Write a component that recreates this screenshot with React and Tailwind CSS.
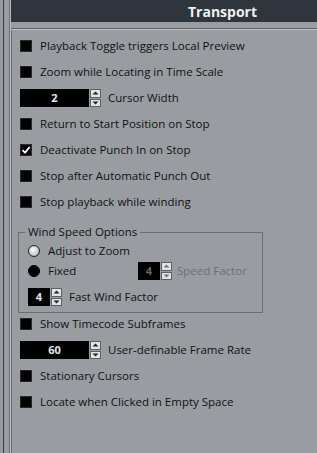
import { useState } from 'react';

const font = { fontFamily: '"Open Sans", "Noto Sans", sans-serif' };

// Black square checkbox, optionally ticked
const Check = ({ checked }) => (
  <span className="flex h-[12px] w-[12px] shrink-0 items-center justify-center border border-[#2a2a2a] bg-black">
    {checked && (
      <svg width="10" height="10" viewBox="0 0 10 10">
        <path d="M1.5 5.2 L4 7.6 L8.6 2.2" fill="none" stroke="#fff" strokeWidth="1.8" />
      </svg>
    )}
  </span>
);

const Row = ({ label, checked }) => (
  <div className="flex h-[26px] items-center gap-[8px] pl-[8px]">
    <Check checked={checked} />
    <span className="text-[11.5px] text-[#111]">{label}</span>
  </div>
);

// Tiny up/down spinner
const Spin = ({ disabled }) => (
  <div className="flex h-full w-[11px] flex-col gap-[1px] ml-[1px]">
    {[0, 1].map(i => (
      <div key={i} className="flex flex-1 items-center justify-center border border-[#5c5f63] bg-[#e2e3e4]">
        <svg width="7" height="4" viewBox="0 0 7 4">
          <path d={i === 0 ? 'M0.5 3.5 L3.5 0.5 L6.5 3.5 Z' : 'M0.5 0.5 L3.5 3.5 L6.5 0.5 Z'} fill={disabled ? '#777' : '#222'} />
        </svg>
      </div>
    ))}
  </div>
);

const NumField = ({ value, width, disabled }) => (
  <div className="flex h-[18px] shrink-0 items-stretch">
    <div
      className={`flex items-center justify-center bg-black text-[11px] font-bold ${disabled ? 'text-[#666]' : 'text-[#e8e8f0]'}`}
      style={{ width }}
    >
      {value}
    </div>
    <Spin disabled={disabled} />
  </div>
);

const Radio = ({ filled }) => (
  <span
    className={`h-[12px] w-[12px] shrink-0 rounded-full border ${
      filled ? 'border-black bg-black' : 'border-[#222] bg-[radial-gradient(circle_at_40%_40%,#ffffff,#c9c9c9_60%,#777)]'
    }`}
  />
);

export default function App() {
  const [rows] = useState([
    ['Playback Toggle triggers Local Preview', false],
    ['Zoom while Locating in Time Scale', false]
  ]);

  return (
    <div className="flex h-[453px] w-[317px] overflow-hidden bg-[#999da1]" style={font}>
      {/* left strip */}
      <div className="flex w-[11px] shrink-0">
        <div className="w-[3px]" />
        <div className="w-[1px] bg-[#3a3d41]" />
        <div className="w-[5px]" />
        <div className="w-[1px] bg-[#6e7276]" />
        <div className="w-[1px] bg-[#b9bcbf]" />
      </div>

      <div className="flex flex-1 flex-col">
        <div className="flex h-[22px] items-center bg-[#2f353d] pl-[177px]">
          <span className="text-[14px] font-bold text-[#eef0f2]">Transport</span>
        </div>
        <div className="h-[6px]" />
        <div className="h-[1px] bg-[#5f6367]" />
        <div className="h-[1px] bg-[#bfc2c5]" />

        <div className="flex flex-1 border-l border-[#6a6e72]">
          <div className="flex flex-1 flex-col pt-[3px]">
            {rows.map(([l, c]) => (
              <Row key={l} label={l} checked={c} />
            ))}
            <div className="flex h-[26px] items-center gap-[7px] pl-[8px]">
              <NumField value="2" width={69} />
              <span className="text-[11.5px] text-[#111]">Cursor Width</span>
            </div>
            <Row label="Return to Start Position on Stop" />
            <Row label="Deactivate Punch In on Stop" checked />
            <Row label="Stop after Automatic Punch Out" />
            <Row label="Stop playback while winding" />

            {/* Wind Speed Options group */}
            <div className="relative ml-[6px] mt-[17px] w-[245px] border border-[#6b6f73] px-[9px] pb-[5px] pt-[8px]">
              <span className="absolute left-[6px] top-[-10px] bg-[#999da1] px-[3px] text-[11.5px] text-[#111]">
                Wind Speed Options
              </span>
              <div className="flex h-[20px] items-center gap-[8px]">
                <Radio />
                <span className="text-[11.5px] text-[#111]">Adjust to Zoom</span>
              </div>
              <div className="flex h-[20px] items-center">
                <Radio filled />
                <span className="ml-[8px] w-[90px] text-[11.5px] text-[#111]">Fixed</span>
                <NumField value="4" width={22} disabled />
                <span className="ml-[5px] text-[11.5px] text-[#6c6f73]">Speed Factor</span>
              </div>
              <div className="mt-[6px] flex h-[20px] items-center gap-[7px]">
                <NumField value="4" width={22} />
                <span className="text-[11.5px] text-[#111]">Fast Wind Factor</span>
              </div>
            </div>

            <div className="mt-[-2px]" />
            <Row label="Show Timecode Subframes" />
            <div className="flex h-[26px] items-center gap-[7px] pl-[8px]">
              <NumField value="60" width={69} />
              <span className="text-[11.5px] text-[#111]">User-definable Frame Rate</span>
            </div>
            <Row label="Stationary Cursors" />
            <Row label="Locate when Clicked in Empty Space" />
          </div>
        </div>
      </div>
    </div>
  );
}
